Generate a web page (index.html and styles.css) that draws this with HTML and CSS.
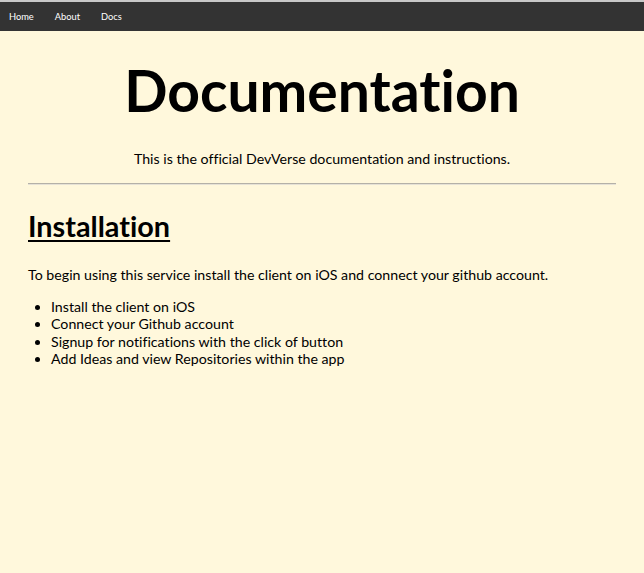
FILE: index.html
```html
<!DOCTYPE html>
<html lang="en">
<head>
<meta charset="utf-8">
<title>Documentation</title>
<link rel="stylesheet" href="styles.css">
</head>
<body>
<nav class="topnav">
  <a href="#" class="nav-link">Home</a>
  <a href="#" class="nav-link">About</a>
  <a href="#" class="nav-link">Docs</a>
</nav>
<main class="content">
  <header class="page-header">
    <h1 class="title">Documentation</h1>
    <p class="subtitle">This is the official DevVerse documentation and instructions.</p>
  </header>
  <hr class="divider">
  <section class="section">
    <h2 class="section-title">Installation</h2>
    <p class="section-text">To begin using this service install the client on iOS and connect your github account.</p>
    <ul class="steps">
      <li>Install the client on iOS</li>
      <li>Connect your Github account</li>
      <li>Signup for notifications with the click of button</li>
      <li>Add Ideas and view Repositories within the app</li>
    </ul>
  </section>
</main>
</body>
</html>
```

FILE: styles.css
```css
html, body {
  margin: 0;
  padding: 0;
}
body {
  background: #fff8dc;
  color: #000;
  font-family: Lato, "Noto Sans", sans-serif;
  font-size: 14.2px;
  line-height: 17.4px;
  font-variant-ligatures: none;
  min-height: 573px;
}
.topnav {
  display: flex;
  align-items: center;
  height: 29px;
  background: #333333;
  border-top: 2px solid #c8c8c8;
}
.nav-link {
  color: #fff;
  text-decoration: none;
  font-size: 9.3px;
  margin-left: 9px;
  margin-right: 12px;
}
.content {
  padding: 0 28px;
}
.page-header {
  text-align: center;
}
.title {
  margin: 0;
  padding-top: 27px;
  font-size: 57px;
  line-height: 64px;
  font-weight: 700;
}
.subtitle {
  margin: 28px 0 0;
}
.divider {
  margin: 16px 0 0;
  border: 0;
  border-top: 1px solid #b4b1a8;
  border-bottom: 1px solid #e6e2d6;
}
.section-title {
  margin: 24px 0 0;
  font-size: 28.8px;
  line-height: 34px;
  text-decoration: underline;
  text-decoration-thickness: 2px;
  text-underline-offset: 3px;
  font-weight: 700;
}
.section-text {
  margin: 23px 0 0;
}
.steps {
  margin: 14px 0 0;
  padding-left: 23px;
}
```
